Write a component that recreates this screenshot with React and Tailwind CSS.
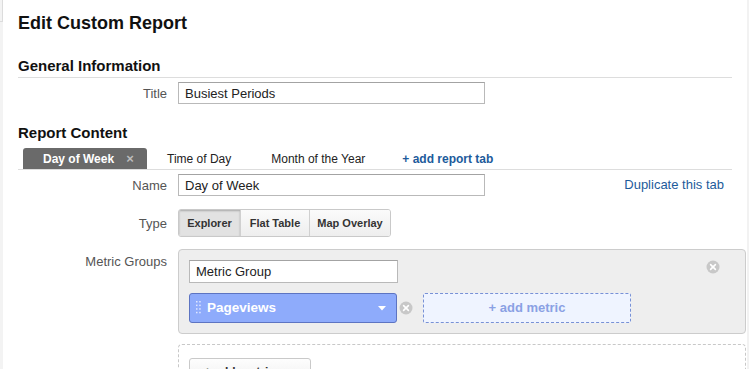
import React from "react";

function CircleX({ className = "" }) {
  return (
    <svg width="14" height="14" viewBox="0 0 14 14" className={className}>
      <circle cx="7" cy="7" r="6.5" fill="#c8c8c8" />
      <path d="M4.6 4.6 L9.4 9.4 M9.4 4.6 L4.6 9.4" stroke="#fff" strokeWidth="1.6" strokeLinecap="round" />
    </svg>
  );
}

function Label({ children, className = "" }) {
  return (
    <div className={"w-[149px] shrink-0 text-right text-[13px] leading-[15px] text-[#555] " + className}>
      {children}
    </div>
  );
}

function TextInput({ value, w = "w-[307px]", h = "h-[22px]" }) {
  return (
    <div className={w + " " + h + " flex items-center border border-[#b9b9b9] border-t-[#a3a3a3] bg-white pl-[6px] text-[13px] leading-[15px] text-[#222]"}>
      {value}
    </div>
  );
}

export default function App() {
  return (
    <div className="flex h-[369px] w-[749px] overflow-hidden bg-white font-['Liberation_Sans',Arial,sans-serif]">
      <div className="w-[3px] shrink-0 bg-[#f3f3f3]">
        <div className="h-[22px] border-b border-r border-[#dcdcdc]" />
      </div>
      <div className="flex-1 pl-[15px]">
        <h1 className="mt-[14px] text-[18px] font-bold leading-[18px] text-[#111]">Edit Custom Report</h1>

        <div className="mt-[26px] w-[714px] border-b border-[#dddddd] pb-[4px]">
          <h2 className="text-[15px] font-bold leading-[15px] text-[#111]">General Information</h2>
        </div>

        <div className="mt-[4px] flex items-center gap-[11px]">
          <Label>Title</Label>
          <TextInput value="Busiest Periods" />
        </div>

        <h2 className="mt-[21px] text-[15px] font-bold leading-[15px] text-[#111]">Report Content</h2>

        <div className="mt-[8px] flex h-[22px] w-[714px] items-end border-b border-[#dddddd] pl-[5px]">
          <div className="flex h-[21px] w-[124px] items-center rounded-t-[3px] bg-[#6a6a6a] pl-[20px] text-[12px] font-bold text-white">
            <span>Day of Week</span>
            <span className="ml-[12px] text-[13px] font-bold text-[#bdbdbd]">×</span>
          </div>
          <div className="flex h-[21px] items-center px-[20px] text-[12px] text-[#222]">Time of Day</div>
          <div className="flex h-[21px] items-center px-[20px] text-[12px] text-[#222]">Month of the Year</div>
          <div className="ml-[17px] flex h-[21px] items-center text-[12px] font-bold text-[#1d5b9b]">+ add report tab</div>
        </div>

        <div className="mt-[4px] flex w-[714px] items-center">
          <Label>Name</Label>
          <div className="ml-[11px]">
            <TextInput value="Day of Week" />
          </div>
          <div className="ml-auto mr-[8px] text-[13px] text-[#1d5b9b]">Duplicate this tab</div>
        </div>

        <div className="mt-[13px] flex items-center gap-[11px]">
          <Label>Type</Label>
          <div className="flex h-[28px] overflow-hidden rounded-[3px] border border-[#c9c9c9] text-[11px] font-bold text-[#333]">
            <div className="flex w-[61px] items-center justify-center bg-[#e2e2e2] shadow-[inset_0_1px_2px_rgba(0,0,0,0.25)]">Explorer</div>
            <div className="flex w-[69px] items-center justify-center border-l border-[#d0d0d0] bg-gradient-to-b from-[#fbfbfb] to-[#eeeeee]">Flat Table</div>
            <div className="flex w-[81px] items-center justify-center border-l border-[#d0d0d0] bg-gradient-to-b from-[#fbfbfb] to-[#eeeeee]">Map Overlay</div>
          </div>
        </div>

        <div className="mt-[12px] flex items-start gap-[11px]">
          <Label className="mt-[5px]">Metric Groups</Label>
          <div className="relative w-[568px] rounded-[4px] border border-[#cccccc] bg-[#eeeeee] p-[10px]">
            <CircleX className="absolute right-[25px] top-[10px]" />
            <TextInput value="Metric Group" w="w-[209px]" h="h-[23px]" />
            <div className="mt-[10px] flex items-center">
              <div className="flex h-[30px] w-[208px] items-center rounded-[3px] border border-[#5d74c2] bg-[#8eabfb] pl-[6px] pr-[10px]">
                <svg width="5" height="14" viewBox="0 0 5 14">
                  {[0, 3.6, 7.2, 10.8].map((y) => (
                    <g key={y}>
                      <rect x="0" y={y} width="1.5" height="1.5" fill="#dfe7ff" />
                      <rect x="3.2" y={y} width="1.5" height="1.5" fill="#dfe7ff" />
                    </g>
                  ))}
                </svg>
                <span className="ml-[6px] text-[13.5px] font-bold text-white">Pageviews</span>
                <svg width="8" height="5" viewBox="0 0 8 5" className="ml-auto">
                  <path d="M0 0 L8 0 L4 4.5 Z" fill="#fff" />
                </svg>
              </div>
              <CircleX className="ml-[2px]" />
              <div className="ml-[10px] flex h-[30px] w-[208px] items-center justify-center rounded-[2px] border border-dashed border-[#7891d6] bg-[#eff4ff] text-[13px] font-bold text-[#8aa1e4]">
                + add metric
              </div>
            </div>
          </div>
        </div>

        <div className="ml-[160px] mt-[10px] h-[40px] w-[568px] rounded-t-[4px] border border-dashed border-[#c8c8c8] px-[10px] pt-[13px]">
          <div className="flex h-[28px] w-[122px] items-start rounded-[3px] border border-[#c9c9c9] bg-gradient-to-b from-[#fdfdfd] to-[#efefef] pl-[14px] pt-[6px] text-[12px] font-bold leading-[14px] text-[#333]">
            + add metric group
          </div>
        </div>
      </div>
      <div className="w-[2px] shrink-0 bg-[#f2f2f2]" />
    </div>
  );
}
